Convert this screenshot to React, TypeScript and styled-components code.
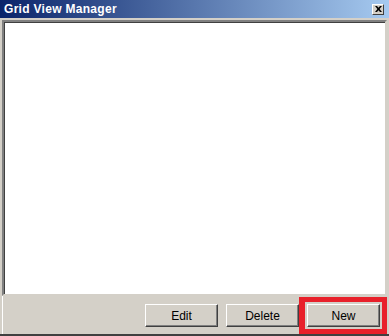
import { FC } from 'react'
import styled, { createGlobalStyle } from 'styled-components'

const colors = {
  face: '#d4d0c8',
  shadow: '#808080',
  dark: '#404040',
  light: '#ffffff',
  titleFrom: '#0a246a',
  titleTo: '#a6caf0',
  highlight: '#e8202a',
}

const GlobalStyle = createGlobalStyle`
  html, body {
    margin: 0;
    padding: 0;
    background: ${colors.face};
  }
  body {
    font-family: 'Liberation Sans', Arial, sans-serif;
  }
`

const App: FC = () => {
  const buttons = ['Edit', 'Delete', 'New']

  return (
    <>
      <GlobalStyle />
      <Window>
        <TitleBar>
          <Title>Grid View Manager</Title>
          <CloseButton aria-label="close">
            <svg width="7" height="6" viewBox="0 0 7 6">
              <path d="M0 0h2l1.5 1.8L5 0h2L4.6 3 7 6H5L3.5 4.2 2 6H0l2.4-3z" fill="#000" />
            </svg>
          </CloseButton>
        </TitleBar>
        <Body>
          <ListArea />
          <Footer>
            {buttons.map((name) => (
              <ButtonSlot key={name}>
                <Button>{name}</Button>
                {name === 'New' && <Marker />}
              </ButtonSlot>
            ))}
          </Footer>
        </Body>
      </Window>
    </>
  )
}

const Window = styled.div`
  width: 389px;
  height: 336px;
  box-sizing: border-box;
  display: flex;
  flex-direction: column;
  background: ${colors.face};
  border-bottom: 2px solid ${colors.dark};
`

const TitleBar = styled.div`
  height: 18px;
  display: flex;
  align-items: center;
  justify-content: space-between;
  padding: 0 5px 0 4px;
  background: linear-gradient(to right, ${colors.titleFrom}, ${colors.titleTo});
`

const Title = styled.div`
  color: #fff;
  font-family: 'Liberation Sans', Arial, sans-serif;
  font-weight: bold;
  font-size: 12px;
  letter-spacing: 0.3px;
  line-height: 18px;
`

const CloseButton = styled.div`
  width: 12px;
  height: 11px;
  box-sizing: border-box;
  display: flex;
  align-items: center;
  justify-content: center;
  background: ${colors.face};
  border: 1px solid;
  border-color: ${colors.light} ${colors.dark} ${colors.dark} ${colors.light};
`

const Body = styled.div`
  flex: 1;
  display: flex;
  flex-direction: column;
  padding: 2px 2px 0 2px;
`

const ListArea = styled.div`
  flex: 1;
  background: #fff;
  border: 2px solid;
  border-color: ${colors.shadow} ${colors.face} ${colors.face} ${colors.shadow};
  box-shadow: inset 1px 1px 0 ${colors.dark};
`

const Footer = styled.div`
  height: 37px;
  display: flex;
  align-items: center;
  justify-content: flex-end;
  gap: 8px;
  padding: 1px 7px 0 0;
  border-left: 1px solid ${colors.light};
`

const ButtonSlot = styled.div`
  position: relative;
  display: flex;
`

const Marker = styled.div`
  position: absolute;
  left: -8px;
  right: -7px;
  top: -7px;
  bottom: -7px;
  border: 5px solid ${colors.highlight};
  border-left-width: 6px;
  pointer-events: none;
`

const Button = styled.button`
  width: 73px;
  height: 23px;
  box-sizing: border-box;
  padding: 0;
  background: ${colors.face};
  font-family: 'Liberation Sans', Arial, sans-serif;
  font-size: 12px;
  color: #000;
  border: 1px solid;
  border-color: ${colors.light} ${colors.dark} ${colors.dark} ${colors.light};
  box-shadow: inset -1px -1px 0 ${colors.shadow};
`

export default App
